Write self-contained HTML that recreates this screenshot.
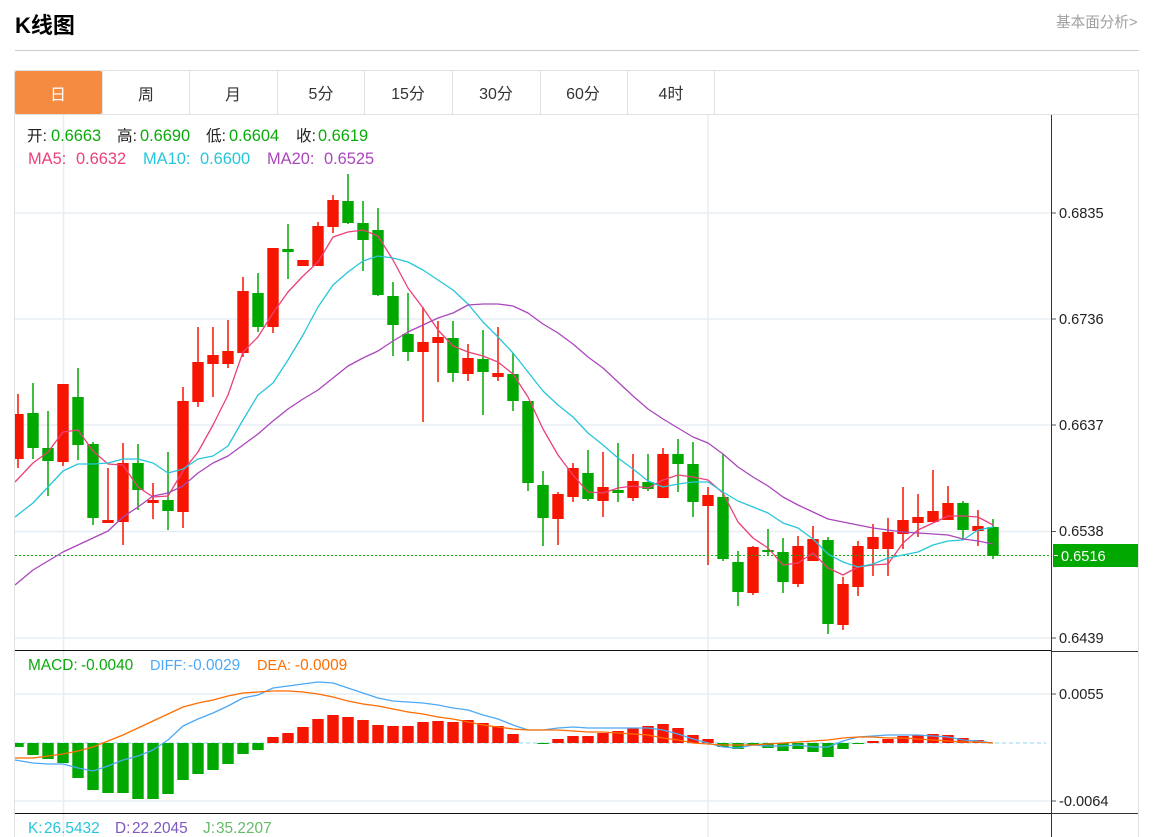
<!DOCTYPE html>
<html lang="zh">
<head>
<meta charset="utf-8">
<title>K线图</title>
<style>
html,body{margin:0;padding:0;background:#fff;width:1167px;height:837px;overflow:hidden}
svg{display:block;position:absolute;left:0;top:0}
text{font-family:"Liberation Sans","Noto Sans CJK SC",sans-serif}
.ax{font-size:14.6px;fill:#222}
.t{font-size:16px;fill:#333;text-anchor:middle}
.i{font-size:16.4px}
.m{font-size:15.4px}
.l{font-size:14.6px}
</style>
</head>
<body>
<svg width="1167" height="837" viewBox="0 0 1167 837" xmlns="http://www.w3.org/2000/svg">
<defs><clipPath id="c"><rect x="15" y="115" width="1036" height="722"/></clipPath></defs>

<text x="15" y="33" font-size="22" font-weight="bold" fill="#000">K线图</text>
<text x="1056" y="27" font-size="14.6" fill="#a0a0a0">基本面分析&gt;</text>
<path d="M15 50.5H1139" stroke="#ccc" fill="none"/>

<path d="M14.5 837V70.5H1138.5V837M14.5 114.5H1138.5M102.5 71V114M189.5 71V114M277.5 71V114M364.5 71V114M452.5 71V114M540.5 71V114M627.5 71V114M714.5 71V114" stroke="#e1e1e1" fill="none"/>
<rect x="15" y="71" width="87" height="43" rx="2" fill="#f48b40"/>
<text class="t" x="58" y="100" style="fill:#fff">日</text>
<text class="t" x="146" y="100">周</text>
<text class="t" x="233" y="100">月</text>
<text class="t" x="321" y="99">5分</text>
<text class="t" x="408" y="99">15分</text>
<text class="t" x="496" y="99">30分</text>
<text class="t" x="583" y="99">60分</text>
<text class="t" x="671" y="99">4时</text>

<!-- grid -->
<path d="M63.5 115V837M708 115V837" stroke="#e6edf3" stroke-width="1.5" fill="none"/>
<path d="M15 213H1051M15 319H1051M15 425H1051M15 531.5H1051M15 638H1051M15 694H1051M15 801H1051" stroke="#e6edf3" stroke-width="1.5" fill="none"/>

<g clip-path="url(#c)" fill="none">
<!-- wicks -->
<path stroke="#f61500" stroke-width="1.5" d="M18 394V468M63 384V466M108 468V523M123 443V545M153 483V519M183 387V528M198 327V407M213 327V397M228 320V368M243 277V357M273 248V333M318 222V266M333 195V233M423 307V422M438 321V382M468 344V381M498 327V381M558 492V545M573 463V502M603 452V517M633 454V501M663 448V498M708 487V565M753 546V595M798 536V587M813 526V561M843 577V630M858 541V596M873 524V576M888 518V576M903 487V549M918 494V537M933 470V522M948 486V520M978 510V546"/>
<path stroke="#00a800" stroke-width="1.5" d="M33 383V459M48 411V496M78 368V460M93 442V525M138 444V510M168 452V530M258 273V332M288 224V279M348 174V224M363 201V271M378 208V296M393 282V356M408 293V361M453 321V382M483 330V415M513 353V411M528 401V491M543 471V546M588 450V501M618 443V502M648 454V491M678 439V492M693 442V517M723 454V561M738 551V606M768 529V556M783 538V593M828 537V634M963 501V539M993 519V559"/>
<!-- bodies -->
<path stroke="#f61500" stroke-width="11.4" d="M18 414V459M63 384V462M108 520V523M123 463V522M153 500V503M183 401V512M198 362V402M213 355V364M228 351V364M243 291V353M273 248V327M303 260V266M318 226V266M333 200V227M423 342V352M438 337V343M468 358V374M498 373V377M558 494V519M573 468V497M603 487V501M633 481V498M663 454V498M708 495V506M753 547V593M798 546V584M813 539V561M843 584V625M858 546V587M873 537V549M888 532V549M903 520V534M918 517V523M933 511V522M948 503V520M978 526V531"/>
<path stroke="#00a800" stroke-width="11.4" d="M33 413V448M48 448V461M78 397V445M93 444V518M138 463V490M168 500V511M258 293V327M288 249V252M348 201V223M363 223V240M378 230V295M393 296V325M408 334V352M453 338V373M483 359V372M513 374V401M528 401V483M543 485V518M588 473V499M618 490V493M648 482V489M678 454V464M693 464V502M723 497V559M738 562V592M768 550V552M783 552V582M828 540V624M963 503V530M993 527V556"/>

<path stroke="#12a812" stroke-width="1" stroke-dasharray="2 2" d="M15 555.5H1050"/>

<!-- MA lines -->
<path stroke="#ec407a" stroke-width="1.3" stroke-linejoin="round" d="M15 482L33 463 48 452 63 432 78 430 93 451 108 464 123 465 138 487 153 497 168 496 183 471 198 452 213 425 228 395 243 352 258 337 273 313 288 292 303 276 318 262 333 237 348 232 363 230 378 236 393 260 408 288 423 308 438 330 453 346 468 352 483 356 498 362 513 374 528 397 543 429 558 455 573 475 588 492 603 493 618 488 633 486 648 488 663 480 678 475 693 477 708 480 723 493 738 522 753 538 768 548 783 565 798 563 813 553 828 568 843 575 858 567 873 565 888 564 903 543 918 530 933 523 948 516 963 516 978 517 993 525"/>
<path stroke="#26c6da" stroke-width="1.3" stroke-linejoin="round" d="M15 517L33 503 48 487 63 471 78 464 93 464 108 463 123 459 138 459 153 463 168 473 183 469 198 459 213 456 228 446 243 420 258 395 273 383 288 360 303 335 318 307 333 285 348 272 363 261 378 256 393 258 408 262 423 270 438 280 453 290 468 304 483 322 498 337 513 353 528 372 543 391 558 405 573 417 588 433 603 445 618 458 633 469 648 481 663 487 678 484 693 482 708 482 723 492 738 501 753 507 768 513 783 523 798 528 813 539 828 554 843 562 858 567 873 564 888 558 903 555 918 552 933 545 948 541 963 540 978 530 993 527"/>
<path stroke="#ab47bc" stroke-width="1.3" stroke-linejoin="round" d="M15 585L33 570 48 561 63 552 78 545 93 538 108 531 123 517 138 507 153 496 168 493 183 486 198 473 213 463 228 456 243 445 258 434 273 421 288 409 303 399 318 390 333 378 348 366 363 358 378 351 393 341 408 332 423 325 438 318 453 313 468 305 483 304 498 304 513 306 528 313 543 324 558 333 573 344 588 357 603 368 618 382 633 396 648 409 663 419 678 428 693 437 708 443 723 454 738 467 753 477 768 486 783 497 798 505 813 512 828 519 843 522 858 525 873 528 888 530 903 532 918 533 933 534 948 535 963 539 978 541 993 544"/>

<!-- MACD -->
<path stroke="#b3e3f5" stroke-width="1.5" stroke-dasharray="4 3" d="M15 743H1046"/>
<path stroke="#00a800" stroke-width="11.4" d="M18 743V747M33 743V755M48 743V759M63 743V763M78 743V778M93 743V790M108 743V793M123 743V793M138 743V799M153 743V799M168 743V794M183 743V780M198 743V774M213 743V770M228 743V764M243 743V754M258 743V750M543 743V744M723 743V747M738 743V749M753 743V745M768 743V748M783 743V751M798 743V749M813 743V752M828 743V757M843 743V749M858 743V744"/>
<path stroke="#f61500" stroke-width="11.4" d="M273 743V737M288 743V733M303 743V727M318 743V719M333 743V715M348 743V717M363 743V720M378 743V725M393 743V726M408 743V726M423 743V722M438 743V721M453 743V722M468 743V720M483 743V723M498 743V726M513 743V734M558 743V739M573 743V736M588 743V736M603 743V733M618 743V731M633 743V728M648 743V726M663 743V724M678 743V728M693 743V735M708 743V739M873 743V741M888 743V739M903 743V736M918 743V735M933 743V734M948 743V735M963 743V738M978 743V740"/>
<path stroke="#4da9f5" stroke-width="1.3" stroke-linejoin="round" d="M15 760L33 763 48 764 63 764 78 768 93 771 108 766 123 760 138 756 153 750 168 740 183 726 198 719 213 713 228 706 243 698 258 695 273 688 288 686 303 684 318 682 333 683 348 688 363 693 378 698 393 701 408 702 423 703 438 705 453 708 468 710 483 715 498 719 513 725 528 730 543 730 558 728 573 727 588 728 603 728 618 728 633 728 648 728 663 730 678 734 693 739 708 743 723 747 738 748 753 745 768 746 783 746 798 745 813 747 828 747 843 741 858 737 873 736 888 735 903 735 918 735 933 736 948 737 963 740 978 741 993 743"/>
<path stroke="#ff6d00" stroke-width="1.3" stroke-linejoin="round" d="M15 758L33 758 48 756 63 754 78 751 93 747 108 741 123 735 138 728 153 721 168 714 183 707 198 703 213 700 228 696 243 693 258 692 273 691 288 691 303 692 318 694 333 697 348 701 363 704 378 706 393 709 408 712 423 714 438 717 453 719 468 722 483 725 498 727 513 729 528 730 543 730 558 730 573 731 588 732 603 732 618 733 633 734 648 735 663 738 678 740 693 743 708 744 723 745 738 745 753 745 768 744 783 743 798 742 813 741 828 740 843 738 858 737 873 737 888 738 903 738 918 739 933 740 948 741 963 742 978 742 993 743"/>
</g>

<!-- pane frames -->
<path d="M15 650.5H1051M15 813.5H1051" stroke="#111" stroke-width="1" fill="none"/>
<path d="M1051.5 115V837M1052 651.5H1138M1052 813.5H1138" stroke="#333" stroke-width="1" fill="none"/>
<path d="M1052 213H1056M1052 319H1056M1052 425H1056M1052 531.5H1056M1052 638H1056M1052 694H1056M1052 801H1056" stroke="#555" fill="none"/>

<!-- axis labels -->
<text class="ax" x="1059" y="218">0.6835</text>
<text class="ax" x="1059" y="324">0.6736</text>
<text class="ax" x="1059" y="430">0.6637</text>
<text class="ax" x="1059" y="536">0.6538</text>
<text class="ax" x="1059" y="643">0.6439</text>
<text class="ax" x="1059" y="699">0.0055</text>
<text class="ax" x="1059" y="806">-0.0064</text>
<rect x="1053" y="544" width="85" height="23" fill="#00a800"/>
<path d="M1054 555.5H1058" stroke="#fff" fill="none"/>
<text x="1061" y="561" font-size="14.6" fill="#fff">0.6516</text>

<!-- legends -->
<g class="i">
<text x="27" y="141" fill="#222" font-size="15.6">开:</text><text x="51" y="141" fill="#0aaa0a">0.6663</text>
<text x="117" y="141" fill="#222" font-size="15.6">高:</text><text x="140" y="141" fill="#0aaa0a">0.6690</text>
<text x="206" y="141" fill="#222" font-size="15.6">低:</text><text x="229" y="141" fill="#0aaa0a">0.6604</text>
<text x="296" y="141" fill="#222" font-size="15.6">收:</text><text x="318" y="141" fill="#0aaa0a">0.6619</text>
<text x="28" y="164" fill="#ec407a">MA5:</text><text x="76" y="164" fill="#ec407a">0.6632</text>
<text x="143" y="164" fill="#26c6da">MA10:</text><text x="200" y="164" fill="#26c6da">0.6600</text>
<text x="267" y="164" fill="#ab47bc">MA20:</text><text x="324" y="164" fill="#ab47bc">0.6525</text>
</g>
<g class="m">
<text x="28" y="670" fill="#0aaa0a">MACD:</text><text x="81" y="670" fill="#0aaa0a">-0.0040</text>
<text x="150" y="670" fill="#4da9f5" class="l">DIFF:</text><text x="188" y="670" fill="#4da9f5">-0.0029</text>
<text x="257" y="670" fill="#ff6d00" class="l">DEA:</text><text x="295" y="670" fill="#ff6d00">-0.0009</text>
<text x="28" y="833" fill="#26c6da">K:</text><text x="44" y="833" fill="#26c6da">26.5432</text>
<text x="115" y="833" fill="#7e57c2">D:</text><text x="132" y="833" fill="#7e57c2">22.2045</text>
<text x="203" y="833" fill="#66bb6a">J:</text><text x="216" y="833" fill="#66bb6a">35.2207</text>
</g>
</svg>
</body>
</html>
